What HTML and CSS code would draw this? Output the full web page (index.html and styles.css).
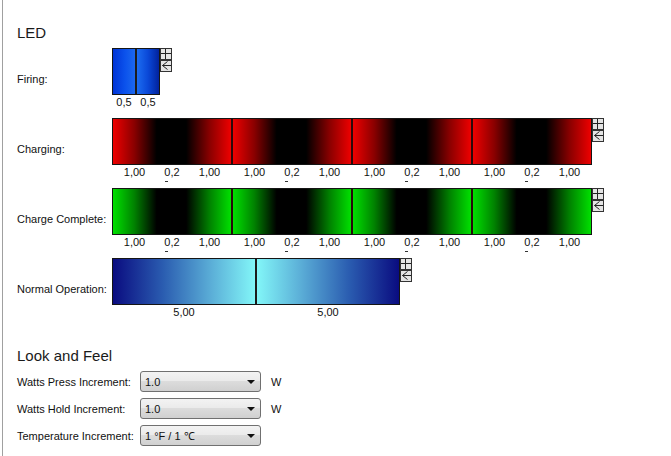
FILE: index.html
```html
<!DOCTYPE html>
<html lang="en">
    <head>
        <meta charset="UTF-8">
        <title>LED settings</title>
        <link rel="stylesheet" href="styles.css">
    </head>
    <body>
        <div class="panel">
            <h2 class="title title-led">LED</h2>

            <!-- Firing: two blue steps -->
            <div class="led-row">
                <div class="row-label">Firing:</div>
                <div class="strip">
                    <div class="strip-top">
                        <div class="bar bar-firing">
                            <div class="seg blue-a"></div>
                            <div class="seg blue-b"></div>
                        </div>
                        <div class="tools">
                            <span class="tool"><svg width="10" height="10" viewBox="0 0 10 10"><path d="M0 4.5H10M4.5 0V10" stroke="#222" stroke-width="1" fill="none"/></svg></span>
                            <span class="tool"><svg width="10" height="10" viewBox="0 0 10 10"><path d="M6.5 0.5L1.5 4.5L6.5 8.5M1.5 4.5H10" stroke="#222" stroke-width="1" fill="none"/></svg></span>
                        </div>
                    </div>
                    <div class="values values-firing">
                        <div class="val-cell"><span>0,5</span></div>
                        <div class="val-cell"><span>0,5</span></div>
                    </div>
                </div>
            </div>

            <!-- Charging: red pulses -->
            <div class="led-row">
                <div class="row-label">Charging:</div>
                <div class="strip">
                    <div class="strip-top">
                        <div class="bar bar-wide">
                            <div class="seg pulse-red"></div>
                            <div class="seg pulse-red"></div>
                            <div class="seg pulse-red"></div>
                            <div class="seg pulse-red"></div>
                        </div>
                        <div class="tools">
                            <span class="tool"><svg width="10" height="10" viewBox="0 0 10 10"><path d="M0 4.5H10M4.5 0V10" stroke="#222" stroke-width="1" fill="none"/></svg></span>
                            <span class="tool"><svg width="10" height="10" viewBox="0 0 10 10"><path d="M6.5 0.5L1.5 4.5L6.5 8.5M1.5 4.5H10" stroke="#222" stroke-width="1" fill="none"/></svg></span>
                        </div>
                    </div>
                    <div class="values values-wide">
                        <div class="val-cell pulse"><span>1,00</span><span><i class="key">0</i>,2</span><span>1,00</span></div>
                        <div class="val-cell pulse"><span>1,00</span><span><i class="key">0</i>,2</span><span>1,00</span></div>
                        <div class="val-cell pulse"><span>1,00</span><span><i class="key">0</i>,2</span><span>1,00</span></div>
                        <div class="val-cell pulse"><span>1,00</span><span><i class="key">0</i>,2</span><span>1,00</span></div>
                    </div>
                </div>
            </div>

            <!-- Charge complete: green pulses -->
            <div class="led-row">
                <div class="row-label">Charge Complete:</div>
                <div class="strip">
                    <div class="strip-top">
                        <div class="bar bar-wide">
                            <div class="seg pulse-green"></div>
                            <div class="seg pulse-green"></div>
                            <div class="seg pulse-green"></div>
                            <div class="seg pulse-green"></div>
                        </div>
                        <div class="tools">
                            <span class="tool"><svg width="10" height="10" viewBox="0 0 10 10"><path d="M0 4.5H10M4.5 0V10" stroke="#222" stroke-width="1" fill="none"/></svg></span>
                            <span class="tool"><svg width="10" height="10" viewBox="0 0 10 10"><path d="M6.5 0.5L1.5 4.5L6.5 8.5M1.5 4.5H10" stroke="#222" stroke-width="1" fill="none"/></svg></span>
                        </div>
                    </div>
                    <div class="values values-wide">
                        <div class="val-cell pulse"><span>1,00</span><span><i class="key">0</i>,2</span><span>1,00</span></div>
                        <div class="val-cell pulse"><span>1,00</span><span><i class="key">0</i>,2</span><span>1,00</span></div>
                        <div class="val-cell pulse"><span>1,00</span><span><i class="key">0</i>,2</span><span>1,00</span></div>
                        <div class="val-cell pulse"><span>1,00</span><span><i class="key">0</i>,2</span><span>1,00</span></div>
                    </div>
                </div>
            </div>

            <!-- Normal operation: slow cyan breathing -->
            <div class="led-row">
                <div class="row-label">Normal Operation:</div>
                <div class="strip">
                    <div class="strip-top">
                        <div class="bar bar-normal">
                            <div class="seg breathe-up"></div>
                            <div class="seg breathe-down"></div>
                        </div>
                        <div class="tools">
                            <span class="tool"><svg width="10" height="10" viewBox="0 0 10 10"><path d="M0 4.5H10M4.5 0V10" stroke="#222" stroke-width="1" fill="none"/></svg></span>
                            <span class="tool"><svg width="10" height="10" viewBox="0 0 10 10"><path d="M6.5 0.5L1.5 4.5L6.5 8.5M1.5 4.5H10" stroke="#222" stroke-width="1" fill="none"/></svg></span>
                        </div>
                    </div>
                    <div class="values values-normal">
                        <div class="val-cell"><span>5,00</span></div>
                        <div class="val-cell"><span>5,00</span></div>
                    </div>
                </div>
            </div>

            <h2 class="title title-look">Look and Feel</h2>
            <div class="form-row">
                <div class="form-label">Watts Press Increment:</div>
                <div class="combo"><span>1.0</span><i class="arrow"></i></div>
                <div class="unit">W</div>
            </div>
            <div class="form-row">
                <div class="form-label">Watts Hold Increment:</div>
                <div class="combo"><span>1.0</span><i class="arrow"></i></div>
                <div class="unit">W</div>
            </div>
            <div class="form-row">
                <div class="form-label">Temperature Increment:</div>
                <div class="combo"><span>1 °F / 1 ℃</span><i class="arrow"></i></div>
            </div>
        </div>
    </body>
</html>
```

FILE: styles.css
```css
html, body {
    margin: 0;
    padding: 0;
    background: #fff;
}
body {
    font-family: "Liberation Sans", Arial, sans-serif;
    font-size: 11px;
    color: #111;
}
.panel {
    margin-left: 2px;
    border-left: 1px solid #a0a0a0;
    padding-left: 14px;
    min-height: 456px;
    box-sizing: border-box;
    overflow: hidden;
}
.title {
    margin: 0;
    font-size: 15px;
    font-weight: normal;
    line-height: 18px;
    color: #1a1a1a;
}
.title-led {
    padding-top: 24px;
    margin-bottom: 6px;
}
.title-look {
    margin-top: 28px;
    margin-bottom: 6px;
}

/* led rows */
.led-row {
    display: grid;
    grid-template-columns: 95px auto;
    align-items: center;
    margin-bottom: 9px;
}
.row-label {
    white-space: nowrap;
}
.strip {
    display: flex;
    flex-direction: column;
}
.strip-top {
    display: flex;
    align-items: flex-start;
}
.bar {
    display: flex;
    height: 47px;
    border: 1px solid #151515;
    box-sizing: border-box;
}
.bar-firing { width: 48px; }
.bar-wide { width: 480px; }
.bar-normal { width: 288px; }
.seg {
    flex: 1;
}
.seg + .seg {
    border-left: 2px solid #1c1c1c;
}
.bar-wide .seg + .seg {
    border-left-color: #2a0a0a;
}
.blue-a {
    background: linear-gradient(to right, #0034d6, #0b52ec 55%, #1c68ee);
}
.blue-b {
    background: linear-gradient(to right, #1c6cf0, #0a48d8 50%, #02229c);
}
.pulse-red {
    background: linear-gradient(to right, #ee0000 0%, #8a0000 18%, #000 37%, #000 62%, #8a0000 82%, #ee0000 100%);
}
.pulse-green {
    background: linear-gradient(to right, #00e000 0%, #008200 18%, #000 37%, #000 62%, #008200 82%, #00e000 100%);
}
.breathe-up {
    background: linear-gradient(to right, #0a0c80, #2a5cb0 35%, #5cb0d8 70%, #82f6f8);
}
.breathe-down {
    background: linear-gradient(to right, #82f6f8, #5cb0d8 30%, #2a5cb0 65%, #0a0c80);
}

/* + / back buttons next to a strip */
.tools {
    display: flex;
    flex-direction: column;
}
.tool {
    display: block;
    width: 10px;
    height: 10px;
    border: 1px solid #333;
    background: #e4e4e4;
}
.tool svg {
    display: block;
}

/* numbers under the strips */
.values {
    display: flex;
    height: 14px;
    line-height: 14px;
}
.values-firing { width: 48px; }
.values-wide { width: 480px; }
.values-normal { width: 288px; }
.val-cell {
    flex: 1;
    text-align: center;
}
.val-cell.pulse {
    display: grid;
    grid-template-columns: 45fr 30fr 45fr;
}
.key {
    font-style: normal;
    position: relative;
}
.key::after {
    content: "";
    position: absolute;
    left: 1px;
    bottom: -4px;
    width: 3px;
    height: 1px;
    background: #333;
}

/* look and feel */
.form-row {
    display: flex;
    align-items: center;
    height: 21px;
    margin-bottom: 6px;
}
.form-label {
    width: 123px;
    white-space: nowrap;
}
.combo {
    width: 121px;
    height: 21px;
    box-sizing: border-box;
    border: 1px solid #707070;
    border-radius: 3px;
    background: linear-gradient(#f3f3f3, #ebebeb 45%, #dcdcdc 50%, #d0d0d0);
    display: flex;
    align-items: center;
    padding-left: 4px;
    position: relative;
}
.arrow {
    position: absolute;
    right: 5px;
    top: 8px;
    width: 0;
    height: 0;
    border-left: 4px solid transparent;
    border-right: 4px solid transparent;
    border-top: 4px solid #111;
}
.unit {
    margin-left: 10px;
}
```
